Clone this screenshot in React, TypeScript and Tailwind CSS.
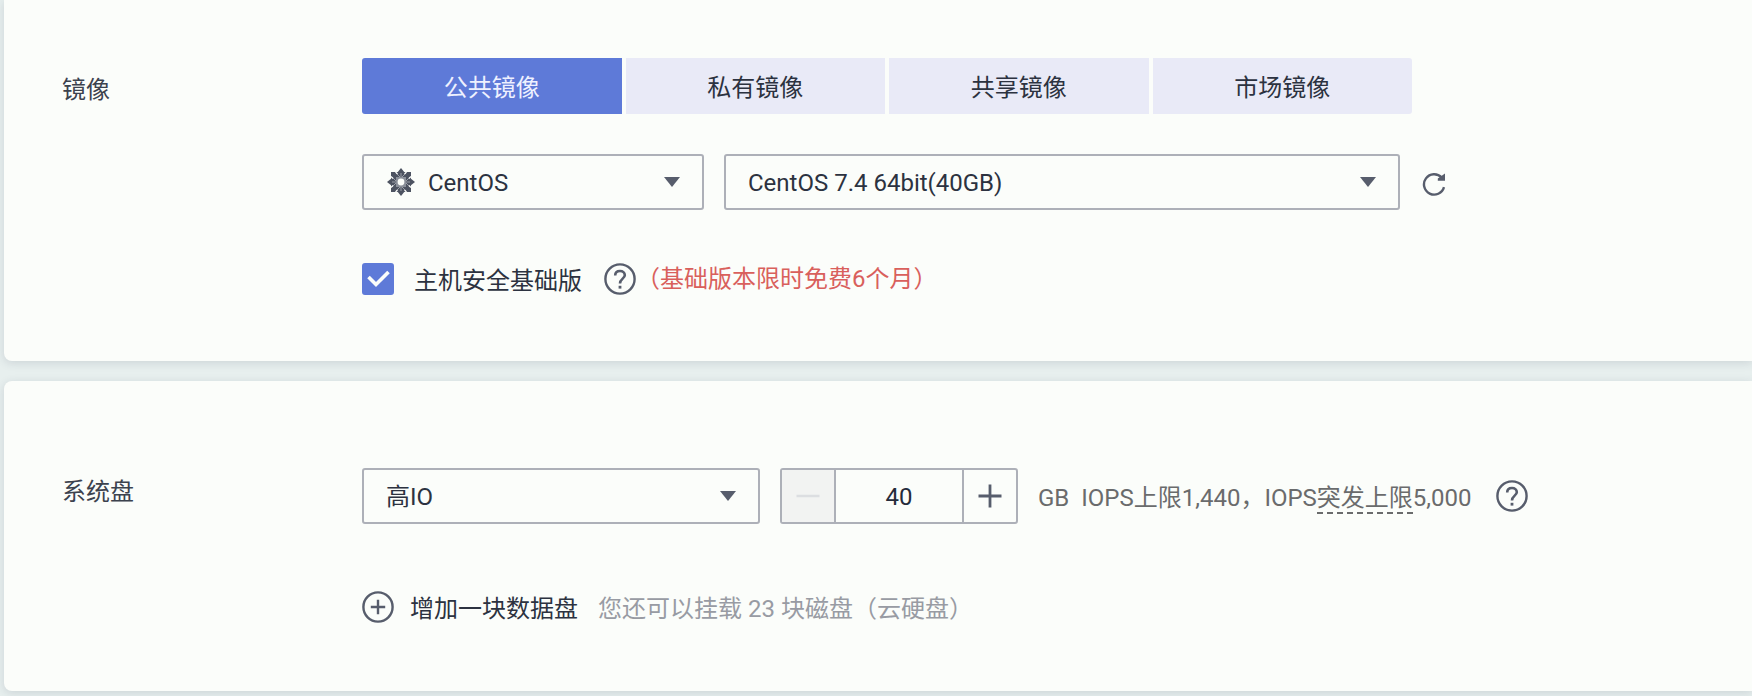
import { useState } from "react";
import type { ReactNode } from "react";

const IMAGE_TYPES = ["公共镜像", "私有镜像", "共享镜像", "市场镜像"];

function CentosIcon() {
  return (
    <svg viewBox="0 0 28 28" className="pointer-events-none absolute left-[25px] size-7" aria-hidden="true">
      <g fill="#4d5361">
        <rect x="4" y="4" width="20" height="20" />
        <path d="M14 0 L18 5 L14 10 L10 5 Z M14 28 L18 23 L14 18 L10 23 Z M0 14 L5 10 L10 14 L5 18 Z M28 14 L23 10 L18 14 L23 18 Z" />
      </g>
      <g stroke="#9a9ea7" strokeWidth="1" fill="none">
        <path d="M14 5 V23 M5 14 H23" />
        <path d="M9 5 L14 10 L19 5 M9 23 L14 18 L19 23 M5 9 L10 14 L5 19 M23 9 L18 14 L23 19" />
      </g>
      <rect x="9" y="9" width="10" height="10" fill="#8a8f99" />
      <circle cx="14" cy="14" r="3.4" fill="#fbfdfa" />
      <path d="M8.5 4 L10.5 6 M19.5 4 L17.5 6 M8.5 24 L10.5 22 M19.5 24 L17.5 22 M4 8.5 L6 10.5 M4 19.5 L6 17.5 M24 8.5 L22 10.5 M24 19.5 L22 17.5" stroke="#fbfdfa" strokeWidth="1.2" />
    </svg>
  );
}

function HelpIcon() {
  return (
    <svg viewBox="0 0 32 32" className="size-8" fill="none" stroke="#575d6c" strokeWidth="2.4" aria-hidden="true">
      <circle cx="16" cy="16" r="14.6" />
      <path d="M11.2 12.6 C11.2 9.6 13.2 8 16 8 C18.8 8 20.8 9.7 20.8 12.2 C20.8 15.6 16 15.8 16 20.4" strokeWidth="2.6" />
      <path d="M16 22.8 V25.6" strokeWidth="2.8" />
    </svg>
  );
}

function SelectBox({ label, width, inset, icon, options }: { label: string; width: string; inset: string; icon?: ReactNode; options: string[] }) {
  return (
    <div className={`relative flex items-center ${width}`}>
      {icon}
      <select
        aria-label={label}
        className={`h-14 w-full appearance-none rounded-[3px] border-2 border-[#adb0b8] bg-transparent pt-0.5 pr-14 text-[#2c3240] outline-none ${inset}`}
      >
        {options.map((o) => (
          <option key={o}>{o}</option>
        ))}
      </select>
      <svg viewBox="0 0 16 10" className="pointer-events-none absolute right-6 h-[10px] w-4" aria-hidden="true">
        <path d="M0 0 H16 L8 10 Z" fill="#575d6c" />
      </svg>
    </div>
  );
}

export default function App() {
  const [imageType, setImageType] = useState(0);
  const [size, setSize] = useState(40);
  const [secured, setSecured] = useState(true);

  return (
    <main className="flex min-h-screen flex-col gap-5 bg-[#e7efee] pb-1 pl-1 font-['Roboto','Noto_Sans_CJK_SC',sans-serif] text-2xl leading-8 text-[#3c424e]">
      <section className="flex rounded-bl-lg bg-[#fbfdfa] pt-[58px] pb-[66px] pl-[58px] shadow-[0_2px_10px_rgba(40,50,80,0.14)]">
        <h2 id="image-label" className="w-[300px] shrink-0 pt-4">镜像</h2>
        <div role="group" aria-labelledby="image-label" className="min-w-0 grow">
          <div className="grid max-w-[1050px] grid-cols-4 gap-1 overflow-hidden rounded-[3px]">
            {IMAGE_TYPES.map((name, i) => (
              <button
                key={name}
                type="button"
                aria-pressed={i === imageType}
                onClick={() => setImageType(i)}
                className={`h-14 pt-1 ${i === imageType ? "bg-[#5e7ad8] text-[#eef1ff]" : "bg-[#e9eaf7] text-[#2c3240]"}`}
              >
                {name}
              </button>
            ))}
          </div>

          <div className="mt-10 flex items-center">
            <SelectBox label="操作系统" width="w-[342px]" inset="pl-16" icon={<CentosIcon />} options={["CentOS"]} />
            <div className="w-5 shrink-0" />
            <SelectBox label="镜像版本" width="w-[676px]" inset="pl-[22px]" options={["CentOS 7.4 64bit(40GB)"]} />
            <button type="button" aria-label="刷新" className="mt-1 ml-[22px]">
              <svg viewBox="0 0 24 24" className="size-6" fill="none" stroke="#575d6c" strokeWidth="2.4" aria-hidden="true">
                <path d="M22 15.2 A10.2 10.2 0 1 1 19.6 5.4" />
                <path d="M23 1.4 V8.8 H15.8 V6.6 Z" fill="#575d6c" stroke="none" />
              </svg>
            </button>
          </div>

          <div className="mt-[53px] flex items-center">
            <label className="flex items-center gap-5 text-[#2c3240]">
              <span className="relative flex size-8">
                <input
                  type="checkbox"
                  checked={secured}
                  onChange={(e) => setSecured(e.target.checked)}
                  className="peer size-8 appearance-none rounded-[3px] border-2 border-[#adb0b8] checked:border-[#5e7ad8] checked:bg-[#5e7ad8]"
                />
                <svg viewBox="0 0 32 32" className="pointer-events-none absolute inset-0 hidden size-8 peer-checked:block" aria-hidden="true">
                  <path d="M6.5 14 L14 21.5 L26.5 9" fill="none" stroke="#fbfdfa" strokeWidth="3.6" />
                </svg>
              </span>
              <span className="pt-1 leading-7">主机安全基础版</span>
            </label>
            <button type="button" aria-label="帮助" className="ml-[22px]">
              <HelpIcon />
            </button>
            <span className="text-[#d9605c]">（基础版本限时免费6个月）</span>
          </div>
        </div>
      </section>

      <section className="flex rounded-l-lg bg-[#fbfdfa] pt-[87px] pb-[68px] pl-[58px] shadow-[0_2px_10px_rgba(40,50,80,0.14)]">
        <h2 id="disk-label" className="w-[300px] shrink-0 pt-2">系统盘</h2>
        <div role="group" aria-labelledby="disk-label" className="min-w-0 grow">
          <div className="flex items-center">
            <SelectBox label="磁盘类型" width="w-[398px]" inset="pl-[22px]" options={["高IO"]} />
            <div className="ml-5 flex h-14 w-[238px] overflow-hidden rounded-[3px] border-2 border-[#adb0b8]">
              <button
                type="button"
                aria-label="减少"
                disabled={size <= 40}
                onClick={() => setSize(size - 10)}
                className="flex w-[54px] shrink-0 items-center justify-center border-r-2 border-[#adb0b8] text-[#575d6c] disabled:bg-[#f2f3f2] disabled:text-[#dcdee1]"
              >
                <svg viewBox="0 0 24 24" className="size-6" fill="none" stroke="currentColor" strokeWidth="2.4" aria-hidden="true">
                  <path d="M0.5 12 H23.5" />
                </svg>
              </button>
              <input
                aria-label="磁盘大小"
                inputMode="numeric"
                value={size}
                onChange={(e) => setSize(Number(e.target.value) || 0)}
                className="w-0 min-w-0 grow pt-0.5 text-center text-[#252b3a] outline-none"
              />
              <button
                type="button"
                aria-label="增加"
                onClick={() => setSize(size + 10)}
                className="flex w-[54px] shrink-0 items-center justify-center border-l-2 border-[#adb0b8] text-[#575d6c]"
              >
                <svg viewBox="0 0 24 24" className="size-6" fill="none" stroke="currentColor" strokeWidth="2.8" aria-hidden="true">
                  <path d="M0.5 12 H23.5 M12 0.5 V23.5" />
                </svg>
              </button>
            </div>
            <span className="ml-5 pt-1 leading-7 whitespace-nowrap text-[#6a6b6c]">GB</span>
            <span className="ml-3 pt-1 leading-7 whitespace-nowrap text-[#6a6b6c]">
              IOPS上限1,440，IOPS<span className="border-b-2 border-dashed border-[#6a6b6c]">突发上限</span>5,000
            </span>
            <button type="button" aria-label="帮助" className="ml-6">
              <HelpIcon />
            </button>
          </div>

          <div className="mt-[67px] flex items-center">
            <button type="button" className="flex items-center gap-4 text-[#2c3240]">
              <svg viewBox="0 0 32 32" className="size-8" fill="none" stroke="#575d6c" strokeWidth="2.4" aria-hidden="true">
                <circle cx="16" cy="16" r="14.6" />
                <path d="M8.8 16 H23.2 M16 8.8 V23.2" />
              </svg>
              <span className="pt-1 leading-7">增加一块数据盘</span>
            </button>
            <span className="ml-5 pt-1 leading-7 text-[#989ba3]">您还可以挂载 23 块磁盘（云硬盘）</span>
          </div>
        </div>
      </section>
    </main>
  );
}
